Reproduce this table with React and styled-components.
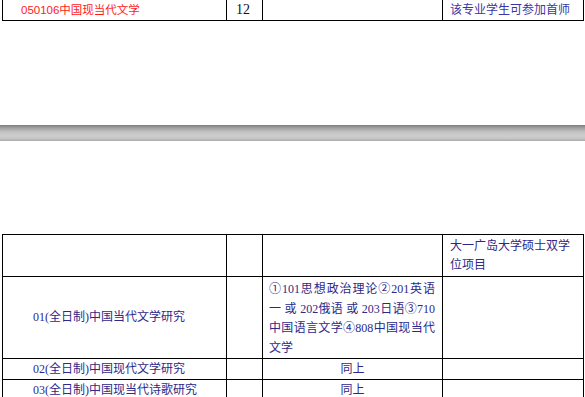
import React from 'react';
import styled, { createGlobalStyle } from 'styled-components';

const GlobalStyle = createGlobalStyle`
  html, body {
    margin: 0;
    padding: 0;
    background: #fff;
  }
  body {
    width: 585px;
    height: 397px;
    overflow: hidden;
    font-family: 'Liberation Serif', 'Noto Sans CJK SC', serif;
  }
`;

const SERIF_CJK = `'Liberation Serif', 'Noto Sans CJK SC', serif`;
const SANS_CJK = `'Liberation Sans', 'Noto Sans CJK SC', sans-serif`;
const INK = '#2e2888';

function Columns() {
  return (
    <colgroup>
      <col style={{ width: 224 }} />
      <col style={{ width: 36 }} />
      <col style={{ width: 180 }} />
      <col style={{ width: 141 }} />
    </colgroup>
  );
}

function App() {
  return (
    <Page>
      <GlobalStyle />
      <Grid>
        <Columns />
        <tbody>
          <Row $h={20} $open>
            <Cell $pl={18}>
              <RedText>050106中国现当代文学</RedText>
            </Cell>
            <Cell $pl={9}>
              <Number>12</Number>
            </Cell>
            <Cell />
            <Cell $pl={7} $valign="bottom">
              <NoteText>该专业学生可参加首师</NoteText>
            </Cell>
          </Row>
        </tbody>
      </Grid>

      <Divider />

      <Grid>
        <Columns />
        <tbody>
          <Row $h={42}>
            <Cell />
            <Cell />
            <Cell />
            <Cell $pl={7} $valign="top">
              <Para $pt={2}>大一广岛大学硕士双学<br />位项目</Para>
            </Cell>
          </Row>
          <Row $h={81}>
            <Cell $pl={30}>
              <Para>01(全日制)中国当代文学研究</Para>
            </Cell>
            <Cell />
            <Cell $pl={6} $pr={7} $valign="top">
              <Exams>
                <Line $justify>①101思想政治理论②201英语</Line>
                <Line $justify>一 或 202俄语 或 203日语③710</Line>
                <Line $justify>中国语言文学④808中国现当代</Line>
                <Line>文学</Line>
              </Exams>
            </Cell>
            <Cell />
          </Row>
          <Row $h={21}>
            <Cell $pl={30}>
              <Para>02(全日制)中国现代文学研究</Para>
            </Cell>
            <Cell />
            <Cell $align="center">
              <Para>同上</Para>
            </Cell>
            <Cell />
          </Row>
          <Row $h={21}>
            <Cell $pl={30}>
              <Para>03(全日制)中国现当代诗歌研究</Para>
            </Cell>
            <Cell />
            <Cell $align="center">
              <Para>同上</Para>
            </Cell>
            <Cell />
          </Row>
        </tbody>
      </Grid>
    </Page>
  );
}

export default App;

const Page = styled.div`
  width: 585px;
  height: 397px;
  padding-left: 2px;
  box-sizing: border-box;
`;

const Grid = styled.table`
  border-collapse: collapse;
  table-layout: fixed;
  width: 582px;
`;

const Row = styled.tr`
  height: ${(p) => p.$h}px;

  td {
    border-top: ${(p) => (p.$open ? 'none' : '1px solid #000')};
  }
`;

const Cell = styled.td`
  border: 1px solid #000;
  padding: 0 ${(p) => p.$pr || 0}px 0 ${(p) => p.$pl || 0}px;
  vertical-align: ${(p) => p.$valign || 'middle'};
  text-align: ${(p) => p.$align || 'left'};
  color: ${INK};
  font-family: ${SERIF_CJK};
  font-size: 12px;
  line-height: 19px;
  overflow: hidden;
  white-space: nowrap;
`;

const RedText = styled.span`
  color: #ff1a1a;
  font-family: ${SANS_CJK};
  font-size: 11.5px;
`;

const Number = styled.span`
  color: #111;
  font-family: 'Liberation Serif', serif;
  font-size: 14px;
`;

const NoteText = styled.span`
  color: #3a36a6;
  font-family: ${SANS_CJK};
  font-size: 12px;
  line-height: 18px;
`;

const Para = styled.div`
  padding-top: ${(p) => p.$pt || 0}px;
  line-height: 19px;
`;

const Exams = styled.div`
  padding-top: 3px;
`;

const Line = styled.div`
  text-align: ${(p) => (p.$justify ? 'justify' : 'left')};
  text-align-last: ${(p) => (p.$justify ? 'justify' : 'left')};
  line-height: 19.5px;
`;

const Divider = styled.div`
  height: 16px;
  margin: 104px 0 93px -2px;
  width: 585px;
  background: linear-gradient(
    to bottom,
    #7c7c7c 0%,
    #a4a4a4 20%,
    #c4c4c4 45%,
    #cdcdcd 70%,
    #c2c2c2 88%,
    #a8a8a8 100%
  );
`;
